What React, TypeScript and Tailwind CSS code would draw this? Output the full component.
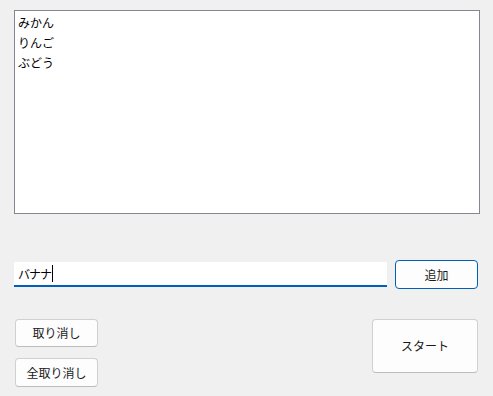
const font = { fontFamily: '"Noto Sans CJK JP", "Noto Sans", sans-serif' };

const items = ["みかん", "りんご", "ぶどう"];

function Btn({
  label,
  className,
}: {
  label: string;
  className: string;
}) {
  return (
    <button
      className={`flex items-center justify-center rounded-[4px] bg-[#fdfdfd] text-[12px] text-[#1a1a1a] ${className}`}
    >
      {label}
    </button>
  );
}

export default function App() {
  return (
    <div
      className="w-[493px] h-[396px] bg-[#f0f0f0] pt-[10px] pl-[14px] flex flex-col"
      style={font}
    >
      <div className="w-[466px] h-[204px] bg-white border border-[#828790] pl-[3px] pt-[2px] flex flex-col">
        {items.map((it) => (
          <div key={it} className="h-[20px] leading-[20px] text-[12px] text-black">
            {it}
          </div>
        ))}
      </div>

      <div className="w-[464px] mt-[46px] flex items-center justify-between">
        <div className="w-[373px] h-[25px] bg-white border-b-2 border-[#005fb8] flex items-center pl-[4px] text-[12px] text-black">
          <span className="tracking-[-1px]">バナナ</span>
          <span className="w-px h-[17px] bg-black ml-[1px]" />
        </div>
        <Btn label="追加" className="w-[83px] h-[29px] border border-[#005fb8]" />
      </div>

      <div className="w-[464px] mt-[30px] flex justify-between items-start">
        <div className="flex flex-col gap-[11px] pl-px">
          <Btn label="取り消し" className="w-[83px] h-[28px] border border-[#d0d0d0] border-b-[#bcbcbc]" />
          <Btn label="全取り消し" className="w-[83px] h-[29px] border border-[#d0d0d0] border-b-[#bcbcbc]" />
        </div>
        <Btn label="スタート" className="w-[106px] h-[54px] border border-[#d0d0d0] border-b-[#bcbcbc]" />
      </div>
    </div>
  );
}
